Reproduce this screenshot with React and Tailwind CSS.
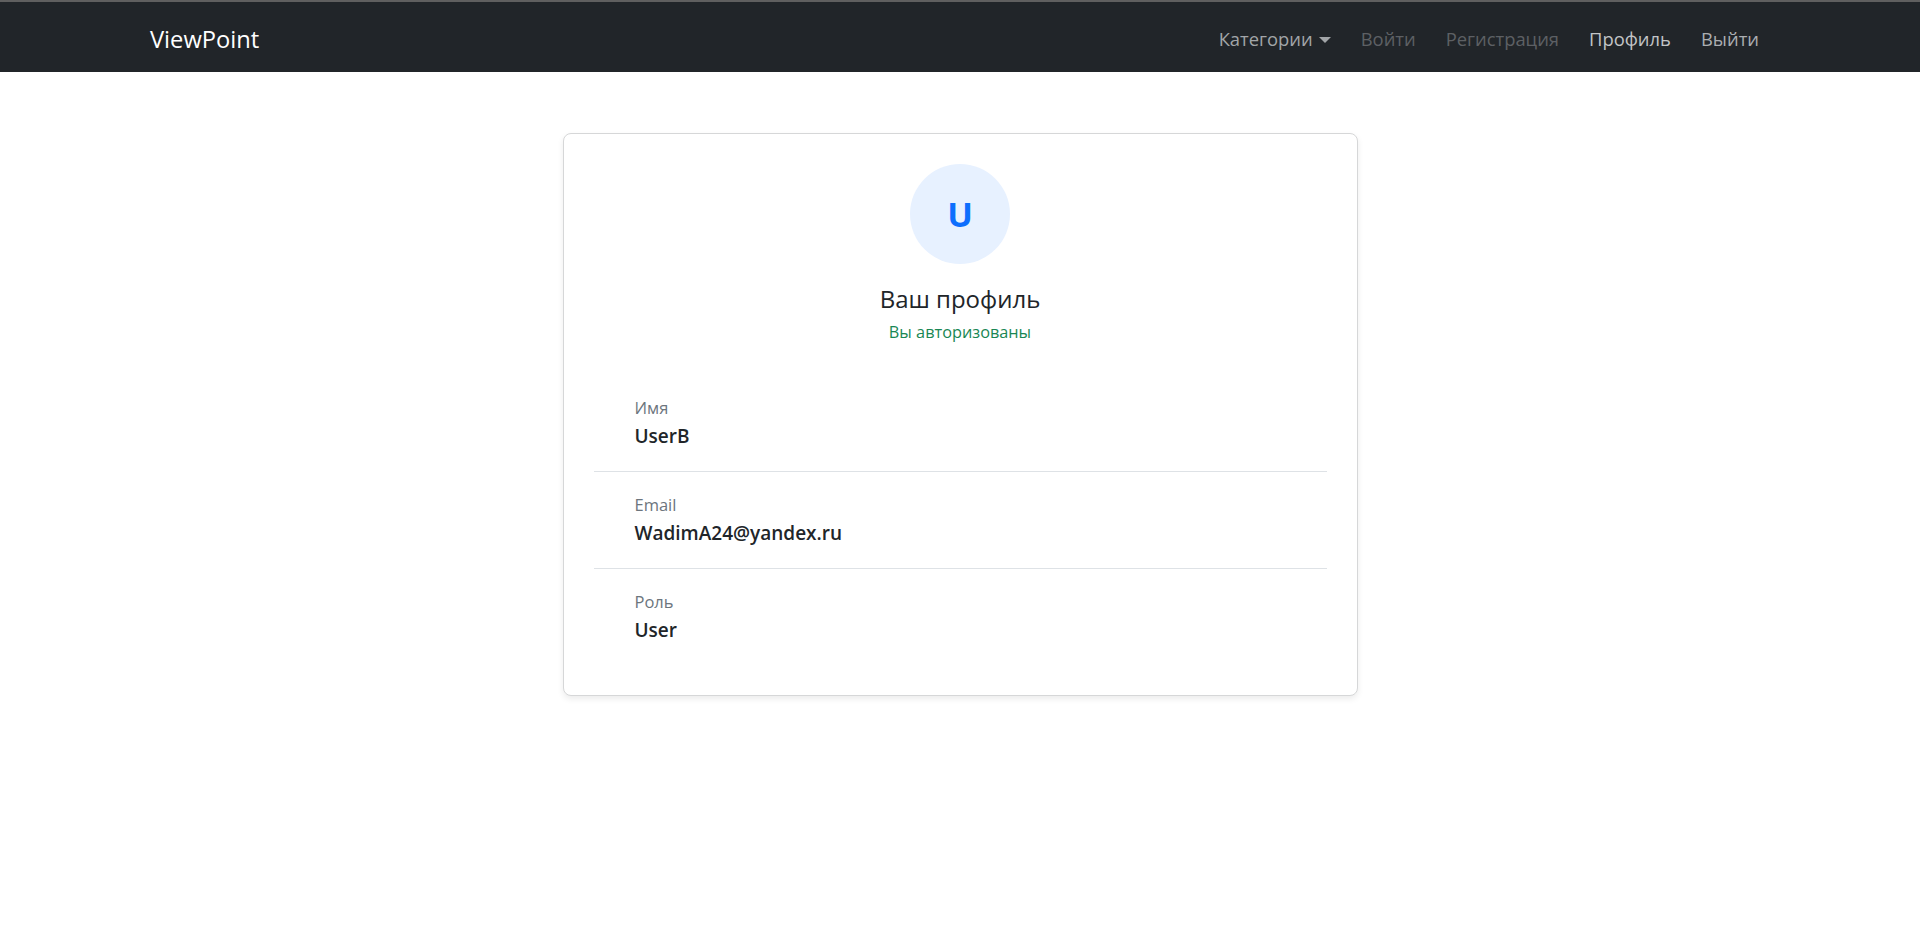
import React from "react";

const fields = [
  { label: "Имя", value: "UserB" },
  { label: "Email", value: "WadimA24@yandex.ru" },
  { label: "Роль", value: "User" },
];

const Navbar = () => (
  <div className="border-t-2 border-[#5f5f5f] bg-[#212529]">
    <nav className="mx-auto flex h-[70px] w-[1650px] items-center justify-between px-[15px] pt-[4px]">
      <a className="text-[23.7px] leading-[30px] text-white">ViewPoint</a>
      <ul className="flex items-center gap-[30px] pr-[11px] text-[18.4px] leading-[30px]">
        <li className="flex items-center text-[#a2a5a8]">
          Категории
          <span className="ml-[6px] mt-[2px] h-0 w-0 border-x-[6px] border-t-[6px] border-x-transparent border-t-[#a2a5a8]" />
        </li>
        <li className="text-[#5d6064]">Войти</li>
        <li className="text-[#5d6064]">Регистрация</li>
        <li className="text-[#c2c4c6]">Профиль</li>
        <li className="text-[#abaeb1]">Выйти</li>
      </ul>
    </nav>
  </div>
);

const ProfileCard = () => (
  <div className="mx-auto mt-[61px] w-[795px] rounded-[8px] border border-[#d6d7d8] bg-white shadow-[0_3px_6px_rgba(0,0,0,0.08)]">
    <div className="p-[30px]">
      <div className="text-center">
        <div className="mx-auto flex h-[100px] w-[100px] items-center justify-center rounded-full bg-[#e7f1ff]">
          <span className="text-[34px] font-bold leading-none text-[#0d6efd]">U</span>
        </div>
        <h5 className="mt-[20px] text-[24px] font-medium leading-[30px] text-[#212529]">Ваш профиль</h5>
        <p className="mt-[5px] text-[16.3px] leading-[26px] text-[#198754]">Вы авторизованы</p>
      </div>

      <ul className="mt-[30px]">
        {fields.map((f, i) => (
          <li
            key={f.label}
            className={
              i < fields.length - 1
                ? "border-b border-[#dee2e6] py-[20px] pl-[41px] pr-[20px]"
                : "py-[20px] pl-[41px] pr-[20px]"
            }
          >
            <div className="text-[16.5px] leading-[26px] text-[#6c757d]">{f.label}</div>
            <div className="text-[19px] font-semibold leading-[30px] text-[#212529]">{f.value}</div>
          </li>
        ))}
      </ul>
    </div>
  </div>
);

export default function App() {
  return (
    <div className="min-h-screen bg-white font-['Open_Sans',sans-serif] text-[#212529]">
      <Navbar />
      <ProfileCard />
    </div>
  );
}
